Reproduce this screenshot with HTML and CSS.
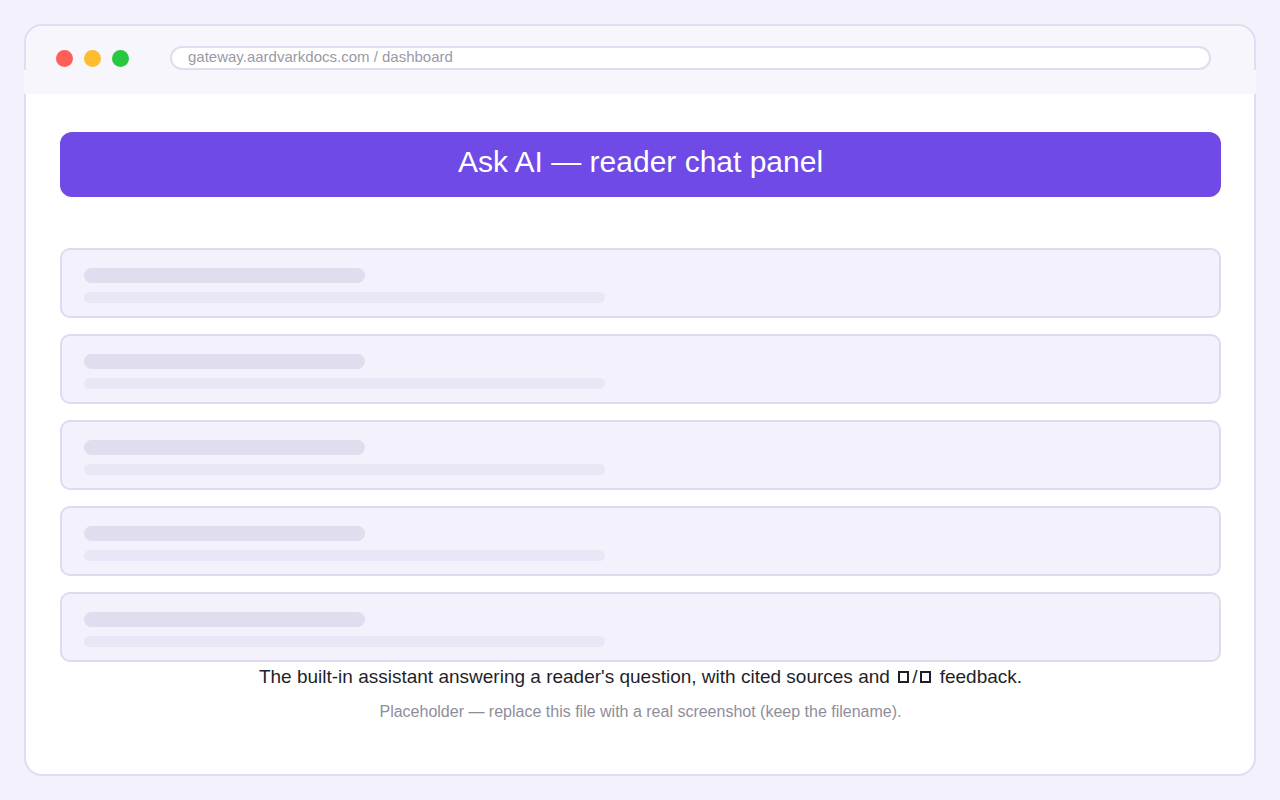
FILE: index.html
```html
<!DOCTYPE html>
<html lang="en">

<head>
    <meta charset="UTF-8">
    <meta name="viewport" content="width=device-width, initial-scale=1.0">
    <title>Ask AI — reader chat panel</title>
    <link rel="stylesheet" href="styles.css">
</head>

<body>
    <div class="frame">
        <div class="toolbar">
            <div class="dots">
                <span class="dot red"></span>
                <span class="dot yellow"></span>
                <span class="dot green"></span>
            </div>
            <div class="url">gateway.aardvarkdocs.com / dashboard</div>
        </div>

        <div class="content">
            <div class="banner">Ask AI — reader chat panel</div>

            <ul class="cards">
                <li><i class="bar long"></i><i class="bar thin"></i></li>
                <li><i class="bar long"></i><i class="bar thin"></i></li>
                <li><i class="bar long"></i><i class="bar thin"></i></li>
                <li><i class="bar long"></i><i class="bar thin"></i></li>
                <li><i class="bar long"></i><i class="bar thin"></i></li>
            </ul>

            <!-- thumbs up / down show as missing-glyph boxes in the original -->
            <p class="caption">The built-in assistant answering a reader's question, with cited sources and <span class="tofu" title="thumbs up"></span>/<span class="tofu" title="thumbs down"></span> feedback.</p>
            <p class="note">Placeholder — replace this file with a real screenshot (keep the filename).</p>
        </div>
    </div>
</body>

</html>
```

FILE: styles.css
```css
body {
    margin: 0;
    padding: 24px;
    background-color: #f3f1fc;
    font-family: "Liberation Sans", Arial, sans-serif;
}

ul {
    margin: 0;
    padding: 0;
}

li {
    list-style: none;
}

.frame {
    height: 748px;
    border: 2px solid #e0ddf0;
    border-radius: 18px;
    background-color: #fff;
}

.toolbar {
    position: relative;
    height: 68px;
    display: flex;
    align-items: flex-start;
    padding: 20px 43px 0 30px;
    box-sizing: border-box;
    background-color: #f7f6fc;
    border-radius: 16px 16px 0 0;
}

/* lower strip of the toolbar runs over the frame border */
.toolbar::after {
    content: '';
    position: absolute;
    left: -2px;
    right: -2px;
    bottom: 0;
    height: 24px;
    background-color: #f7f6fc;
}

.dots {
    display: flex;
    gap: 11px;
    margin-top: 4px;
    width: 114px;
}

.dot {
    width: 17px;
    height: 17px;
    border-radius: 50%;
}

.red {
    background-color: #ff5f57;
}

.yellow {
    background-color: #febc2e;
}

.green {
    background-color: #28c840;
}

.url {
    flex: 1;
    height: 24px;
    line-height: 18px;
    box-sizing: border-box;
    padding-left: 16px;
    border: 2px solid #e0ddf0;
    border-radius: 12px;
    background-color: #fff;
    color: #9a9aa6;
    font-size: 15px;
}

.content {
    padding: 38px 33px 0 34px;
}

.banner {
    height: 65px;
    line-height: 60px;
    border-radius: 12px;
    background-color: #6f4ae6;
    color: #fff;
    font-size: 30px;
    text-align: center;
}

.cards {
    margin-top: 51px;
    display: flex;
    flex-direction: column;
    gap: 16px;
}

.cards li {
    height: 70px;
    box-sizing: border-box;
    padding: 18px 22px 0;
    border: 2px solid #dedbef;
    border-radius: 10px;
    background-color: #f3f1fc;
}

.bar {
    display: block;
    border-radius: 8px;
}

.bar.long {
    width: 281px;
    height: 15px;
    background-color: #e0ddef;
}

.bar.thin {
    width: 521px;
    height: 11px;
    margin-top: 9px;
    background-color: #e9e7f6;
}

.caption {
    margin: 3px 0 0;
    text-align: center;
    font-size: 19px;
    line-height: 24px;
    color: #1f1f2a;
}

.tofu {
    display: inline-block;
    width: 7px;
    height: 8px;
    margin: 0 3px;
    border: 2px solid #1f1f2a;
    vertical-align: 0;
}

.note {
    margin: 13px 0 0;
    text-align: center;
    font-size: 16px;
    line-height: 20px;
    color: #8e8e9a;
}
```
